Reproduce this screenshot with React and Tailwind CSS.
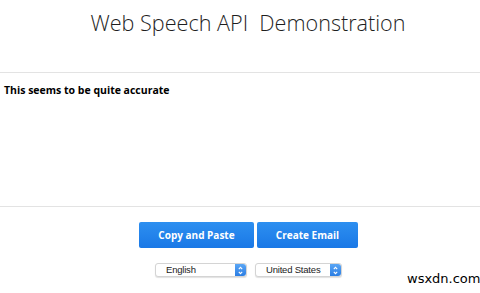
const selectArrow = (
  <span className="flex h-full w-[11px] items-center justify-center rounded-r-[3px] bg-gradient-to-b from-[#5aa6f5] to-[#2a7de3]">
    <svg width="5" height="9" viewBox="0 0 5 9" fill="none" stroke="white" strokeWidth="1.1">
      <path d="M0.8 3.2 L2.5 1.4 L4.2 3.2" />
      <path d="M0.8 5.8 L2.5 7.6 L4.2 5.8" />
    </svg>
  </span>
)

function Select({ label, width }) {
  return (
    <div
      className={`flex h-[14px] items-center justify-between rounded-[3px] border border-[#d4d4d4] bg-white shadow-[0_1px_1px_rgba(0,0,0,0.12)] ${width}`}
    >
      <span className="pl-[10px] font-['Liberation_Sans',sans-serif] text-[9.5px] leading-none tracking-[-0.2px] text-[#222]">
        {label}
      </span>
      {selectArrow}
    </div>
  )
}

export default function App() {
  return (
    <div className="relative h-[293px] w-[480px] overflow-hidden bg-white font-['Open_Sans',sans-serif]">
      <div className="flex h-[72px] justify-center pl-[16px] pt-[8px]">
        <h1 className="text-[21.6px] font-light leading-[30px] text-[#1e1e1e]">
          Web Speech API&nbsp; Demonstration
        </h1>
      </div>
      <div className="h-[135px] border-t border-b border-[#e3e3e3] pl-[4px] pt-[11px]">
        <p className="text-[10.5px] font-bold leading-[13px] text-black">This seems to be quite accurate</p>
      </div>
      <div className="mt-[15px] flex justify-center gap-[3px] pl-[17px]">
        <button className="h-[26px] w-[115px] rounded-[2px] bg-gradient-to-b from-[#2d8ff0] to-[#1a78e6] text-[10px] font-bold text-white">
          Copy and Paste
        </button>
        <button className="h-[26px] w-[101px] rounded-[2px] bg-gradient-to-b from-[#2d8ff0] to-[#1a78e6] text-[10px] font-bold text-white">
          Create Email
        </button>
      </div>
      <div className="mt-[15px] flex justify-center gap-[8px] pl-[17px]">
        <Select label="English" width="w-[92px]" />
        <Select label="United States" width="w-[87px]" />
      </div>
      <span className="absolute left-[407px] top-[271px] font-['DejaVu_Sans',sans-serif] text-[13px] leading-[16px] text-black">
        wsxdn.com
      </span>
    </div>
  )
}
